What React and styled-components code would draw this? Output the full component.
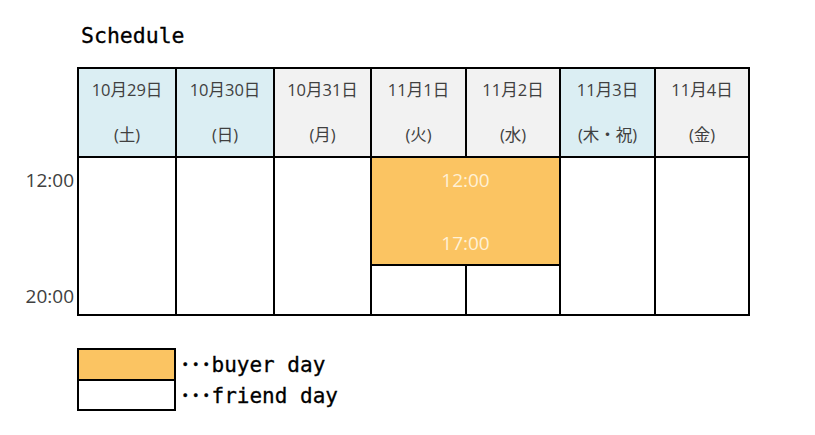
import React from 'react'
import styled, { createGlobalStyle } from 'styled-components'

const GlobalStyle = createGlobalStyle`
  body {
    margin: 0;
    background: #ffffff;
  }
`

const Page = styled.div`
  display: flex;
  flex-direction: column;
  padding-top: 23px;
  font-family: "Open Sans", "Noto Sans CJK JP", sans-serif;
`

const Title = styled.h3`
  margin: 0 0 0 81px;
  font-family: "DejaVu Sans Mono", monospace;
  font-size: 21.5px;
  font-weight: normal;
  line-height: 26px;
  color: #000;
  -webkit-text-stroke: 0.3px #000;
`

const ScheduleRow = styled.div`
  display: flex;
  gap: 3px;
  margin-top: 18px;
`

const TimeAxis = styled.div`
  width: 74px;
  height: 158px;
  margin-top: 91px;
  padding: 10px 0 8px;
  box-sizing: border-box;
  display: flex;
  flex-direction: column;
  justify-content: space-between;
  align-items: flex-end;
  font-size: 19px;
  line-height: 24px;
  color: #404040;
`

const Grid = styled.div`
  display: grid;
  grid-template-columns: 96px 96px 95px 93px 92px 93px 92px;
  grid-template-rows: 87px 106px 48px;
  gap: 2px;
  border: 2px solid #000;
  background: #000;
`

const HeadCell = styled.div`
  display: flex;
  flex-direction: column;
  align-items: center;
  justify-content: center;
  gap: 23px;
  background: ${p => (p.$holiday ? '#dbeef3' : '#f2f2f2')};
  font-size: 16.5px;
  line-height: 22px;
  color: #404040;
  white-space: nowrap;
`

const DayCell = styled.div`
  background: #fff;
  grid-row: span ${p => p.$rows || 1};
`

const BuyerCell = styled.div`
  grid-column: span 2;
  display: flex;
  flex-direction: column;
  align-items: center;
  justify-content: space-between;
  padding: 10px 0 9px;
  background: #fbc462;
  color: #fff1d6;
  font-size: 19px;
  line-height: 24px;
`

const Legend = styled.div`
  display: flex;
  flex-direction: column;
  margin: 32px 0 0 77px;
`

const LegendRow = styled.div`
  display: flex;
  align-items: center;
  gap: 4px;
`

const Swatch = styled.div`
  width: 95px;
  height: ${p => (p.$first ? '29px' : '28px')};
  border: 2px solid #000;
  border-top-width: ${p => (p.$first ? '2px' : '0')};
  background: ${p => p.$color};
`

const LegendText = styled.span`
  font-family: "DejaVu Sans Mono", "Noto Sans CJK JP", monospace;
  font-size: 21px;
  line-height: 26px;
  color: #000;
  -webkit-text-stroke: 0.3px #000;
`

const days = [
  { date: '10月29日', wd: '(土)', holiday: true },
  { date: '10月30日', wd: '(日)', holiday: true },
  { date: '10月31日', wd: '(月)' },
  { date: '11月1日', wd: '(火)' },
  { date: '11月2日', wd: '(水)' },
  { date: '11月3日', wd: '(木・祝)', holiday: true },
  { date: '11月4日', wd: '(金)' },
]

export default function App() {
  return (
    <>
      <GlobalStyle />
      <Page>
        <Title>Schedule</Title>
        <ScheduleRow>
          <TimeAxis>
            <span>12:00</span>
            <span>20:00</span>
          </TimeAxis>
          <Grid>
            {days.map(d => (
              <HeadCell key={d.date} $holiday={d.holiday}>
                <span>{d.date}</span>
                <span>{d.wd}</span>
              </HeadCell>
            ))}
            <DayCell $rows={2} />
            <DayCell $rows={2} />
            <DayCell $rows={2} />
            <BuyerCell>
              <span>12:00</span>
              <span>17:00</span>
            </BuyerCell>
            <DayCell $rows={2} />
            <DayCell $rows={2} />
            <DayCell />
            <DayCell />
          </Grid>
        </ScheduleRow>
        <Legend>
          <LegendRow>
            <Swatch $first $color="#fbc462" />
            <LegendText>･･･buyer day</LegendText>
          </LegendRow>
          <LegendRow>
            <Swatch $color="#fff" />
            <LegendText>･･･friend day</LegendText>
          </LegendRow>
        </Legend>
      </Page>
    </>
  )
}
